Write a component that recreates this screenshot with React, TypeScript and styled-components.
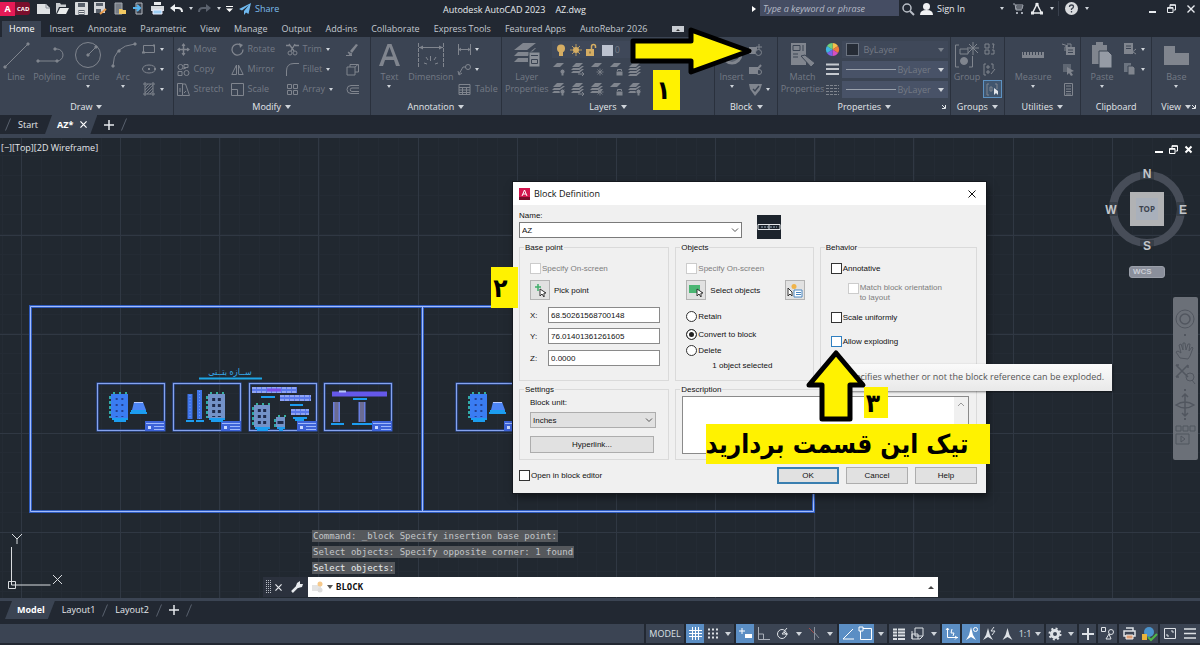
import React from "react";
import styled, { createGlobalStyle, css } from "styled-components";

const ui = `"Open Sans", "Noto Sans", sans-serif`;
const classic = `"Liberation Sans", Arial, sans-serif`;
const mono = `"DejaVu Sans Mono", "Liberation Mono", monospace`;
const persian = `"DejaVu Sans Condensed", "DejaVu Sans", sans-serif`;

const c = {
  frame: "#222832",
  panel: "#3b4453",
  canvas: "#212830",
  text: "#d9dde3",
  dim: "#747a85",
  dimIcon: "#80858e",
  blue: "#5b8ec4",
  yellow: "#fff200",
};

const Global = createGlobalStyle`
  *, *::before, *::after { box-sizing: border-box; }
  body { margin: 0; background: #0d1015; }
  button, input, select, textarea { font: inherit; color: inherit; margin: 0; padding: 0; border: 0; background: none; border-radius: 0; outline: 0; }
  button { cursor: pointer; white-space: nowrap; }
  svg { display: block; flex: none; overflow: visible; }
`;

/* ---------- shared ---------- */

const Page = styled.div`
  position: relative;
  display: flex;
  flex-direction: column;
  min-height: 100vh;
  padding-bottom: 2px;
  overflow: hidden;
  background: ${c.frame};
  color: ${c.text};
  font-family: ${ui};
  font-size: 9px;
  line-height: 12px;
`;

const Caret = styled.span<{ $big?: boolean; $tone?: string }>`
  flex: none;
  border: ${(p) => (p.$big ? 3 : 2)}px solid transparent;
  border-top: ${(p) => (p.$big ? 4 : 3)}px solid ${(p) => p.$tone || "#cfd4da"};
  border-bottom: 0;
`;

const IconButton = styled.button<{ $w?: number }>`
  display: flex;
  align-items: center;
  justify-content: center;
  flex: none;
  width: ${(p) => p.$w || 19}px;
  height: 100%;
`;

type GProps = { w?: number; h?: number; box?: string; sw?: number; children: React.ReactNode };
const G = ({ w = 14, h = w, box, sw = 1, children }: GProps) => (
  <svg width={w} height={h} viewBox={box || `0 0 ${w} ${h}`} fill="none" stroke="currentColor" strokeWidth={sw} aria-hidden="true">
    {children}
  </svg>
);

/* ---------- title bar ---------- */

const TitleBar = styled.header`
  display: grid;
  grid-template-columns: 443fr 306fr 451fr;
  height: 17px;
  color: #e8ebef;
`;
const TitleGroup = styled.div`
  display: flex;
  align-items: center;
  min-width: 0;
`;
const Brand = styled.div`
  display: flex;
  align-items: center;
  width: 30px;
  height: 13px;
  margin-right: 4px;
  background: #7a0f2c;
  color: #fff;
  border-radius: 0 3px 3px 0;
  font-size: 6px;
  font-weight: 700;
`;
const BrandA = styled.span`
  display: grid;
  place-items: center;
  width: 15px;
  height: 14px;
  margin-right: 2px;
  background: #e51a56;
  font-size: 9px;
`;
const Share = styled.button`
  display: flex;
  align-items: center;
  gap: 4px;
  margin-left: 3px;
  color: #7dbdee;
`;
const AppTitle = styled.h1`
  display: flex;
  align-items: center;
  gap: 10px;
  margin: 2px 0 0;
  font-size: 9px;
  font-weight: 400;
`;
const Search = styled.input`
  width: 139px;
  height: 16px;
  align-self: flex-start;
  padding-left: 3px;
  background: #454d63;
  font-style: italic;
  &::placeholder { color: #b5bac6; opacity: 1; }
`;
const Spacer = styled.span<{ $share?: number }>`
  flex: ${(p) => p.$share || 1};
`;
const Flag = styled.span`
  margin: 0 4px 0 3px;
  border: 3px solid transparent;
  border-left: 4px solid #fff;
  border-right: 0;
`;
const SignIn = styled.button`
  display: flex;
  align-items: center;
  gap: 4px;
  margin-left: 3px;
`;
const Rule = styled.span`
  width: 1px;
  height: 15px;
  background: #39404c;
`;

/* ---------- ribbon ---------- */

const MenuBar = styled.nav`
  display: flex;
  align-items: center;
  height: 20px;
  padding: 4px 0 0 2px;
`;
const MenuTab = styled.button<{ $on?: boolean }>`
  height: 16px;
  padding: 0 7px;
  color: #c3c8d0;
  ${(p) => p.$on && css`margin-right: 1px; background: ${c.panel}; color: #fff;`}
`;
const Minimize = styled.button`
  display: grid;
  place-items: center;
  width: 12px;
  height: 6px;
  margin-left: 18px;
  background: #c8ccd2;
`;
const Ribbon = styled.section`
  display: flex;
  height: 78px;
  background: ${c.panel};
  color: ${c.dim};
`;
const Panel = styled.div<{ $grow: number }>`
  display: flex;
  flex-direction: column;
  flex: ${(p) => p.$grow} 1 0;
  min-width: 0;
  border-right: 1px solid #2a313d;
  &:last-child { border-right: 0; }
`;
const PanelBody = styled.div`
  display: flex;
  flex: 1;
  padding-top: 2px;
  white-space: nowrap;
`;
const PanelTitle = styled.div`
  display: grid;
  grid-template-columns: 1fr auto 1fr;
  align-items: center;
  height: 16px;
  padding-bottom: 1px;
  color: #e3e6ea;
`;
const PanelName = styled.span`
  grid-column: 2;
  display: flex;
  align-items: center;
  gap: 4px;
`;
const PanelCorner = styled.button`
  justify-self: end;
  padding-right: 4px;
`;
const Big = styled.button<{ $w: number }>`
  display: flex;
  flex-direction: column;
  align-items: center;
  flex: none;
  width: ${(p) => p.$w}px;
  white-space: normal;
  & > ${Caret} { margin-top: 2px; }
`;
const BigIcon = styled.span`
  display: grid;
  place-items: center;
  height: 32px;
  color: ${c.dimIcon};
`;
const Stack = styled.div<{ $w: number; $pad?: number }>`
  display: flex;
  flex-direction: column;
  flex: none;
  width: ${(p) => p.$w}px;
  padding-left: ${(p) => p.$pad || 0}px;
`;
const Small = styled.button<{ $on?: boolean }>`
  display: flex;
  align-items: center;
  gap: 4px;
  height: 20px;
  & > svg { color: ${c.dimIcon}; }
  ${(p) => p.$on && css`
    justify-content: center;
    width: 19px;
    height: 18px;
    margin-top: 1px;
    border: 1px solid #5d92c2;
    background: #41566e;
  `}
`;
const LayerGrid = styled.div`
  display: grid;
  grid-template-columns: repeat(5, 19px);
`;
const Combo = styled.label<{ $flat?: boolean }>`
  display: flex;
  align-items: center;
  flex: none;
  height: 17px;
  margin: 2px 0 1px;
  padding: 0 4px;
  gap: 1px;
  background: ${(p) => (p.$flat ? "#3f4859" : "#485267")};
`;
const ComboSelect = styled.select`
  flex: 1;
  min-width: 0;
  appearance: none;
`;
const Swatch = styled.span<{ $color: string; $s: number }>`
  width: ${(p) => p.$s}px;
  height: ${(p) => p.$s}px;
  margin-right: 3px;
  border: 1px solid #6b7380;
  background: ${(p) => p.$color};
`;
const LineSample = styled.span`
  width: 50px;
  height: 1px;
  background: #9ba2ad;
`;

type BigToolProps = { w: number; label: string; caret?: boolean; children: React.ReactNode };
const BigTool = ({ w, label, caret, children }: BigToolProps) => (
  <Big $w={w}>
    <BigIcon>{children}</BigIcon>
    {label}
    {caret && <Caret />}
  </Big>
);
type SmallToolProps = { label?: string; caret?: boolean; on?: boolean; name?: string; children: React.ReactNode };
const SmallTool = ({ label, caret, on, name, children }: SmallToolProps) => (
  <Small $on={on} aria-label={name || label}>
    {children}
    {label}
    {caret && <Caret />}
  </Small>
);
type PanelProps = { grow: number; title: string; plain?: boolean; corner?: boolean; children: React.ReactNode };
const RibbonPanel = ({ grow, title, plain, corner, children }: PanelProps) => (
  <Panel $grow={grow}>
    <PanelBody>{children}</PanelBody>
    <PanelTitle>
      <PanelName>
        {title}
        {!plain && <Caret $big />}
      </PanelName>
      {corner && (
        <PanelCorner aria-label={`${title} settings`}>
          <G w={4}><path d="M0 0l3 3M3.500 0v3.500H0" /></G>
        </PanelCorner>
      )}
    </PanelTitle>
  </Panel>
);

type Mark = "bulb" | "freeze" | "lock" | "swap" | "stack";
const LayerIcon = ({ mark, full }: { mark: Mark; full?: boolean }) => (
  <G w={14}>
    <g fill="currentColor" stroke="none">
      <path d="M1 5l4-4h7L8 5z" />
      {full && <path d="M0 8l2-2h6l3-2h2L8.500 8zM0 11l2-2h6l3-2h2l-4.500 4z" />}
      {mark === "stack" && <path d="M0 14l2-2h6l3-2h2l-4.500 4z" />}
      {mark === "bulb" && <path d="M8 9.500a2.500 2.500 0 0 1 5 0q0 1-1 2V14H9v-2.500q-1-1-1-2z" stroke={c.panel} />}
      {mark === "lock" && <path d="M7 9h7v5H7z" stroke={c.panel} />}
    </g>
    {mark === "freeze" && <path d="M10 6.500v7M6.500 10h7M7.500 7.500l5 5M12.500 7.500l-5 5" strokeWidth=".8" />}
    {mark === "lock" && <path d="M8.500 9V7.500h4V9" />}
    {mark === "swap" && <path d="M7 12h6M11 10l2 2-2 2" />}
  </G>
);

/* ---------- file tabs ---------- */

const TabBar = styled.nav<{ $h: number }>`
  display: flex;
  align-items: center;
  height: ${(p) => p.$h}px;
  padding-left: 5px;
  color: #e6e9ed;
`;
const FileTab = styled.button<{ $on?: boolean }>`
  display: flex;
  align-items: center;
  justify-content: center;
  gap: 7px;
  height: 100%;
  padding: 0 7px;
  ${(p) => p.$on && css`
    padding: 0 10px 0 12px;
    background: ${c.panel};
    color: #fff;
    font-weight: 700;
    clip-path: polygon(7px 0, 100% 0, calc(100% - 7px) 100%, 0 100%);
  `}
`;
const Slash = () => (
  <G w={6} h={13}><path d="M5.500 .5L.5 12.500" stroke="#59616e" /></G>
);
const Strip = styled.div<{ $h: number }>`
  height: ${(p) => p.$h}px;
  background: ${c.panel};
`;

/* ---------- model space ---------- */

const Space = styled.main`
  position: relative;
  flex: 1;
  background: ${c.canvas};
  overflow: hidden;
`;
const Drawing = styled.svg`
  position: absolute;
  left: 0;
  top: 0;
`;
const ViewLabel = styled.p`
  position: absolute;
  left: 1px;
  top: 4px;
  margin: 0;
  color: #e3e6e9;
`;
const WindowKeys = styled.div`
  position: absolute;
  right: 4px;
  top: 5px;
  display: flex;
  height: 12px;
  color: #fff;
`;
const Compass = styled.div`
  position: absolute;
  right: 10px;
  top: 28px;
  display: flex;
  flex-direction: column;
  align-items: center;
  gap: 12px;
`;
const Wcs = styled.button`
  width: 36px;
  height: 12px;
  padding-left: 3px;
  border: 1px solid #9a9fa9;
  border-radius: 3px;
  background: #8a8f9b;
  color: #c9cdd5;
  font: 700 8px/10px ${classic};
  text-align: left;
`;
const NavBar = styled.div`
  position: absolute;
  right: 2px;
  top: 159px;
  display: flex;
  width: 25px;
  padding-top: 10px;
  height: 163px;
  justify-content: center;
  background: #6b7078;
  border-radius: 2px;
  color: #51565f;
`;
const History = styled.div`
  position: absolute;
  left: 312px;
  bottom: 24px;
  display: flex;
  flex-direction: column;
  align-items: flex-start;
  gap: 4px;
  color: #c3c6c9;
  font-family: ${mono};
  white-space: pre;
`;
const HistoryLine = styled.span<{ $bright?: boolean }>`
  padding: 0 1px;
  background: #55585c;
  line-height: 12px;
  ${(p) => p.$bright && css`color: #e8eaec;`}
`;
const CommandBar = styled.div`
  position: absolute;
  left: 263px;
  bottom: 1px;
  display: flex;
  align-items: center;
  width: 675px;
  height: 20px;
  background: #2b313d;
  color: #e6e9ed;
`;
const CommandField = styled.label`
  display: flex;
  align-items: center;
  flex: 1;
  height: 20px;
  gap: 3px;
  padding: 0 4px;
  background: #fff;
  color: #111;
`;
const CommandInput = styled.input`
  flex: 1;
  font: 700 9px/12px ${mono};
`;

/* ---------- dialog ---------- */

const Dialog = styled.section`
  position: absolute;
  left: 513px;
  top: 44px;
  width: 473px;
  background: #f0f0f0;
  color: #111;
  font: 8px/11px ${classic};
  box-shadow: 0 0 0 1px #14181e, 2px 4px 8px rgba(0, 0, 0, 0.5);
`;
const DialogTitle = styled.header`
  display: flex;
  align-items: center;
  gap: 4px;
  height: 23px;
  padding: 0 9px 0 6px;
  background: #fff;
  font: 9px/12px ${ui};
`;
const DialogBody = styled.div`
  display: flex;
  flex-direction: column;
  padding: 5px 9px 9px 6px;
`;
const NameRow = styled.div`
  display: flex;
  gap: 15px;
`;
const NameField = styled.label`
  display: flex;
  flex-direction: column;
  gap: 1px;
  width: 223px;
`;
const Picker = styled.span<{ $grey?: boolean }>`
  display: flex;
  align-items: center;
  width: 100%;
  height: 16px;
  padding: 0 2px;
  border: 1px solid ${(p) => (p.$grey ? "#adadad" : "#7a7a7a")};
  background: ${(p) => (p.$grey ? "#e1e1e1" : "#fff")};
`;
const PickerSelect = styled.select`
  flex: 1;
  appearance: none;
`;
const Preview = styled.div`
  display: grid;
  place-items: center;
  width: 24px;
  height: 24px;
  margin-top: 5px;
  background: #1d242d;
`;
const Groups = styled.div`
  display: grid;
  grid-template-columns: 150fr 138fr 157fr;
  gap: 3px 6px;
  margin-top: 3px;
`;
const Box = styled.fieldset<{ $span?: number; $h: number }>`
  grid-column: span ${(p) => p.$span || 1};
  display: flex;
  flex-direction: column;
  min-width: 0;
  height: ${(p) => p.$h}px;
  margin: 0;
  padding: 0 8px 0 10px;
  border: 1px solid #dadada;
  & > legend { height: 11px; margin-left: -6px; padding: 0 1px; }
`;
const Check = styled.label<{ $off?: boolean; $top?: number; $in?: number }>`
  display: flex;
  align-items: flex-start;
  gap: 1px;
  margin: ${(p) => p.$top || 0}px 0 0 ${(p) => p.$in || 0}px;
  line-height: 12px;
  white-space: nowrap;
  color: ${(p) => (p.$off ? "#7d7d7d" : "#111")};
`;
const TwoLines = styled.span`
  line-height: 10px;
`;
const Tick = styled.input<{ $hot?: boolean; $round?: boolean }>`
  appearance: none;
  flex: none;
  width: 11px;
  height: 11px;
  border: 1px solid ${(p) => (p.$hot ? "#2f7fc0" : "#333")};
  background: #fff;
  ${(p) => p.$round && css`border-radius: 50%;`}
  &:disabled { border-color: #ccc; }
  &[type="radio"]:checked { box-shadow: inset 0 0 0 2px #fff; background: #222; }
`;
const Row = styled.div<{ $top: number; $w?: number }>`
  display: flex;
  align-items: center;
  gap: 4px;
  margin-top: ${(p) => p.$top}px;
  ${(p) => p.$w && css`width: ${p.$w}px;`}
`;
const ToolKey = styled.button`
  display: grid;
  place-items: center;
  flex: none;
  width: 20px;
  height: 20px;
  border: 1px solid #b3b3b3;
  background: #e1e1e1;
`;
const Coord = styled.label<{ $top: number }>`
  display: grid;
  grid-template-columns: 18px 1fr;
  align-items: center;
  margin-top: ${(p) => p.$top}px;
`;
const CoordInput = styled.input`
  min-width: 0;
  height: 16px;
  padding: 0 2px;
  border: 1px solid #8a8a8a;
  background: #fff;
`;
const PushButton = styled.button<{ $main?: boolean; $wide?: boolean }>`
  width: ${(p) => (p.$wide ? "124px" : "62px")};
  height: 17px;
  border: ${(p) => (p.$main ? "2px solid #3a7fb0" : "1px solid #adadad")};
  background: #e1e1e1;
`;
const Notes = styled.div`
  display: flex;
  height: 58px;
  margin: 1px -1px 0 -4px;
  border: 1px solid #8a8a8a;
  background: #fff;
`;
const NotesText = styled.textarea`
  flex: 1;
  resize: none;
`;
const ScrollLane = styled.span`
  display: flex;
  justify-content: center;
  width: 14px;
  padding-top: 5px;
  background: #f0f0f0;
  color: #999;
`;
const Footer = styled.footer`
  display: flex;
  align-items: center;
  gap: 7px;
  margin-top: 7px;
`;
const Tooltip = styled.div`
  position: absolute;
  left: 837px;
  top: 226px;
  padding: 7px 8px 8px;
  background: linear-gradient(#fafafa, #e9e9e9);
  color: #555;
  white-space: nowrap;
  box-shadow: 1px 1px 2px rgba(0, 0, 0, 0.5);
`;

/* ---------- notes laid over the window ---------- */

const Marker = styled.strong<{ $x: number; $y: number; $w: number; $h: number; $pad?: number }>`
  position: absolute;
  left: ${(p) => p.$x}px;
  top: ${(p) => p.$y}px;
  display: flex;
  align-items: center;
  justify-content: center;
  width: ${(p) => p.$w}px;
  height: ${(p) => p.$h}px;
  padding-right: ${(p) => p.$pad || 0}px;
  background: ${c.yellow};
  color: #000;
  font-family: ${persian};
  font-size: 26px;
  white-space: nowrap;
`;
const Arrow = styled.svg<{ $x: number; $y: number }>`
  position: absolute;
  left: ${(p) => p.$x}px;
  top: ${(p) => p.$y}px;
  fill: ${c.yellow};
  stroke: #000;
  stroke-width: 5;
  stroke-linejoin: round;
`;

/* ---------- status bar ---------- */

const StatusBar = styled.footer`
  display: flex;
  gap: 2px;
  height: 19px;
  margin-top: 5px;
  color: #dde1e6;
`;
const Segment = styled.div<{ $fill?: boolean }>`
  display: flex;
  align-items: center;
  background: ${c.panel};
  ${(p) => p.$fill && css`flex: 1;`}
`;
const Toggle = styled.button<{ $w: number; $on?: boolean }>`
  display: flex;
  align-items: center;
  justify-content: center;
  gap: 4px;
  width: ${(p) => p.$w}px;
  height: 19px;
  ${(p) => p.$on && css`background: ${c.blue}; color: #fff;`}
`;

/* ---------- drawing content ---------- */

const majors = (n: number, start: number) => Array.from({ length: n }, (_, i) => Math.round(start + i * 99.15) + 0.5);
const minors = (n: number, start: number) => Array.from({ length: n }, (_, i) => Math.round(start + i * 19.83) + 0.5);

const TitleBlock = () => (
  <g>
    <rect x="48" y="38" width="20" height="10" fill="#3d63d8" />
    <path d="M49 40.500h18M57 43.500h10M57 46.500h10" stroke="#9fb8fb" />
    <rect x="51" y="43" width="3" height="3" fill="#c9d8ff" />
  </g>
);
const Frame = ({ x, children }: { x: number; children: React.ReactNode }) => (
  <g transform={`translate(${x} 245)`}>
    <rect x=".5" y=".5" width="67" height="47" stroke="#3358b8" strokeWidth="2" />
    <rect x=".5" y=".5" width="67" height="47" stroke="#86a3ee" />
    <TitleBlock />
    {children}
  </g>
);
type PlanProps = { x: number; y: number; w: number; h: number; open?: boolean };
const Plan = ({ x, y, w, h, open }: PlanProps) => (
  <g>
    <rect x={x} y={y} width={w} height={h} fill={open ? "#7392c8" : "#3a7cf2"} />
    <path d={`M${x + 2} ${y - 1}h${w - 1}`} stroke="#35b09d" strokeWidth="2" strokeDasharray="2 4" />
    <path d={`M${x - 1} ${y + 2}v${h - 2}`} stroke="#2fa9a8" strokeWidth="2" strokeDasharray="3 2" />
    <path
      d={`M${x + w / 3} ${y + 4}v${h - 5}M${x + (2 * w) / 3} ${y + 4}v${h - 5}`}
      stroke={open ? "#1f2b4c" : "#23408f"}
      strokeWidth={open ? 3 : 2}
      strokeDasharray={open ? "3 3" : "2 4"}
    />
    <path d={`M${x + 1} ${y + h + 1}h${w - 1}M${x + 3} ${y + h + 3}h${w - 5}`} stroke="#1c9df0" strokeWidth="2" />
  </g>
);
const FootingSheet = () => (
  <>
    <Plan x={14} y={11} w={17} h={24} />
    <path d="M37 19h9l3 8H35z" fill="#4d85f5" />
    <path d="M37 19.500h9" stroke="#b8caff" />
    <path d="M34 28h15M33 30h17" stroke="#1c9df0" strokeWidth="2" />
  </>
);

const ModelDrawing = () => (
  <Drawing width="1200" height="460" fill="none" aria-hidden="true">
    <g stroke="#242b34">
      {minors(60, 1.5).map((x) => <path key={x} d={`M${x} 0V460`} />)}
      {minors(24, 17).map((y) => <path key={y} d={`M0 ${y}H1200`} />)}
    </g>
    <g stroke="#303843">
      {majors(12, 21).map((x) => <path key={x} d={`M${x} 0V460`} />)}
      {majors(4, 97).map((y) => <path key={y} d={`M0 ${y}H1200`} />)}
    </g>
    <path d="M30.500 168.500H813.500V373.500H30.500ZM422.500 168V373" stroke="#2f5cc0" strokeWidth="3" />
    <path d="M30.500 168.500H813.500V373.500H30.500ZM422.500 168V373" stroke="#a3bcfb" />
    <Frame x={97}><FootingSheet /></Frame>
    <Frame x={173}>
      <path d="M17 11v25M26.500 7v29" stroke="#3f74e8" strokeWidth="5" />
      <path d="M17 12v24M26.500 8v28" stroke="#6f9bff" strokeDasharray="1 2" />
      <path d="M13 38h8M23 38h8" stroke="#1c9df0" strokeWidth="2" />
      <Plan x={35} y={11} w={17} h={24} open />
    </Frame>
    <Frame x={249}>
      <path d="M3 7h45M31 15h31M42 29h18" stroke="#5a78ea" strokeWidth="6" />
      <path d="M3 5h45M31 13h31M42 27h18M3 9h45M31 17h31M42 31h18" stroke="#c3cffb" strokeDasharray="4 1" />
      <path d="M18 7h14" stroke="#7a4fe6" strokeWidth="3" />
      <path d="M12 14h14M41 22h13M44 35h14M46 37h9" stroke="#1c9df0" strokeWidth="2" />
      <Plan x={5} y={22} w={16} h={22} open />
      <Plan x={27} y={34} w={9} h={10} open />
    </Frame>
    <Frame x={324}>
      <path d="M8 11h55" stroke="#6558ea" strokeWidth="5" />
      <path d="M15 8.500h7" stroke="#b6c5fa" strokeWidth="2" />
      <path d="M12.500 19v20M38 19v20" stroke="#6a7fe0" strokeWidth="7" />
      <path d="M12.500 19v20M38 19v20" stroke="#6b6c94" strokeWidth="4" />
      <path d="M29 16h14M7 41h13M28 41h20" stroke="#1c9df0" strokeWidth="2" />
    </Frame>
    <Frame x={456}><FootingSheet /></Frame>
    <text x="230" y="237" fill="#35a9e8" fontFamily={persian} fontSize="9" textAnchor="middle" direction="rtl">ســازه بتــنی</text>
    <path d="M199 240.500h63" stroke="#1ea6e6" strokeWidth="2" />
    <g stroke="#d9dcdf">
      <path d="M11.500 409v38h39M8.500 443.500h7v7h-7z" />
      <path d="M12 396l5 5 5-5M17 401v5M53 437l9 9M62 437l-9 9" />
    </g>
  </Drawing>
);

const ViewCube = () => (
  <svg width="86" height="88" viewBox="0 0 86 88" fill="none" aria-hidden="true">
    <circle cx="43" cy="43" r="34" stroke="#474d58" strokeWidth="8" />
    <path d="M36 3h14v12H36zM36 74h14v14H36zM0 36h13v14H0zM73 36h13v14H73z" fill={c.canvas} opacity=".4" />
    <rect x="26" y="26" width="34" height="34" fill="#b1b2b4" />
    <rect x="32" y="32" width="22" height="22" fill="#a9b0bb" />
    <g fill="#c3c6ca" fontFamily={classic} fontWeight="700" fontSize="12" textAnchor="middle">
      <text x="43" y="12">N</text>
      <text x="43" y="84">S</text>
      <text x="7" y="48">W</text>
      <text x="79" y="48">E</text>
      <text x="43" y="46" fontSize="8" fill="#3c434e" fontFamily={ui}>TOP</text>
    </g>
  </svg>
);

const Restore = () => (
  <G w={9}><path d="M.5 3.500h5.500v5H.5zM3 3V.7h5.500V6H6.500M.5 4.300h5.500M3 1.300h5" /></G>
);
const Cross = ({ s = 7, thin }: { s?: number; thin?: boolean }) => (
  <G w={s} box="0 0 8 8" sw={thin ? 1 : 1.4}><path d="M.5.5l7 7M7.500.5l-7 7" /></G>
);
const Chevron = () => (
  <G w={8} h={5}><path d="M1 .5l3 3 3-3" stroke="#555" /></G>
);
const Disk = () => (
  <G w={13}><path d="M.5.5h12v12H.5z" fill="#d9dbde" stroke="#d9dbde" /><path d="M3 1h7v4H3zM3.500 8h6v5h-6z" fill="#59606b" stroke="none" /><path d="M4 9.500h5M4 11.500h5" stroke="#e9e9e9" /></G>
);

const menus = ["Insert", "Annotate", "Parametric", "View", "Manage", "Output", "Add-ins", "Collaborate", "Express Tools", "Featured Apps", "AutoRebar 2026"];
const layerTools: [string, Mark, boolean][] = [
  ["Turn layer off", "bulb", false],
  ["Isolate layer", "swap", true],
  ["Freeze layer", "freeze", false],
  ["Lock layer", "lock", false],
  ["Make current", "stack", true],
  ["Turn all on", "bulb", true],
  ["Unisolate", "swap", true],
  ["Thaw all", "freeze", true],
  ["Unlock layer", "lock", false],
  ["Match layer", "bulb", true],
];

export default function App() {
  return (
    <Page>
      <Global />
      <TitleBar>
        <TitleGroup>
          <Brand><BrandA>A</BrandA>CAD</Brand>
          <IconButton aria-label="New"><G w={13} h={10}><path d="M0 0h9l4 4v6H0z" fill="#dfe1e4" stroke="none" /><path d="M9 0v4h4" stroke="#8a9099" /></G></IconButton>
          <IconButton aria-label="Open"><G w={13} h={11}><path d="M0 0h4l1 1.500h5V4H3L0 11z" fill="#c9ccd0" stroke="none" /><path d="M4 5h9l-3 6H1z" fill="#e9ebed" stroke="none" /></G></IconButton>
          <IconButton aria-label="Save"><Disk /></IconButton>
          <IconButton aria-label="Save as"><G w={13}><path d="M0 0h11v11H0z" fill="#d2d4d8" stroke="none" /><path d="M2 1h7v3H2zM2 7h5v4H2z" fill="#59606b" stroke="none" /><path d="M6 12l6-5" stroke="#e69a4c" strokeWidth="2" /></G></IconButton>
          <IconButton aria-label="Open from web"><G w={12} h={13}><path d="M1 1h7v11H1z" fill="#777d86" stroke="#a4a9b0" /><path d="M5 7h3l1 1h3v4H5z" fill="#f1c862" stroke="none" /></G></IconButton>
          <IconButton aria-label="Save to web"><G w={12} h={13}><path d="M3 1h6v11H3z" fill="#3a414d" stroke="#b5b9c0" /><path d="M0 6h6M4 3l3 3-3 3" stroke="#57b4ee" strokeWidth="2" /></G></IconButton>
          <IconButton aria-label="Plot"><G w={13}><path d="M3 0h7v3H3z" fill="#e9ebed" stroke="none" /><path d="M0 4h13v5H0z" fill="#d5d8dc" stroke="none" /><path d="M2 8h9v4H2z" fill="#9ccdf2" stroke="#eef" /></G></IconButton>
          <IconButton aria-label="Undo"><G w={13} h={10}><path d="M4 4h4q4 0 4 4" stroke="#eef0f2" strokeWidth="2" /><path d="M0 4l5-4v8z" fill="#eef0f2" stroke="none" /></G></IconButton>
          <IconButton $w={9} aria-label="Undo list"><Caret /></IconButton>
          <IconButton aria-label="Redo"><G w={13} h={10}><path d="M9 4H5Q1 4 1 8" stroke="#5a616d" strokeWidth="2" /><path d="M13 4L8 0v8z" fill="#5a616d" stroke="none" /></G></IconButton>
          <IconButton $w={9} aria-label="Redo list"><Caret /></IconButton>
          <IconButton $w={13} aria-label="Customize"><G w={7} h={6}><path d="M0 .5h7" stroke="#fff" /><path d="M0 2.500h7L3.500 6z" fill="#fff" stroke="none" /></G></IconButton>
          <Share><G w={12}><path d="M12 0L0 6l3 1.500L10 2 5 8v4l2-2.500 2.500 1.500z" fill="#6fb9f0" stroke="none" /></G>Share</Share>
        </TitleGroup>
        <AppTitle><span>Autodesk AutoCAD 2023</span><span>AZ.dwg</span></AppTitle>
        <TitleGroup>
          <Flag />
          <Search aria-label="Search" placeholder="Type a keyword or phrase" />
          <IconButton $w={18} aria-label="Find"><G w={12}><circle cx="5" cy="5" r="4" stroke="#b9bec6" strokeWidth="1.500" /><path d="M8 8l4 4" stroke="#b9bec6" strokeWidth="2" /></G></IconButton>
          <SignIn><G w={13} h={12}><circle cx="6.500" cy="3.500" r="3.500" fill="#f0f1f3" stroke="none" /><path d="M0 12q0-5 6.500-5T13 12z" fill="#f0f1f3" stroke="none" /></G>Sign In</SignIn>
          <Spacer $share={3} />
          <IconButton $w={12} aria-label="Account"><Caret /></IconButton>
          <IconButton $w={20} aria-label="App store"><G w={11}><path d="M0 1h2l1 6h6M3 2h7l-1 4H3zM4 4h5" stroke="#a4a9b2" /><path d="M3 9h2v2H3zM8 9h2v2H8z" fill="#a4a9b2" stroke="none" /></G></IconButton>
          <IconButton $w={18} aria-label="Autodesk"><G w={12}><path d="M6 1l4.500 9h-9z" stroke="#e9ebee" strokeWidth="1.500" /><path d="M4.500 0h3v3h-3zM0 8.500h3v3H0zM9 8.500h3v3H9z" fill="#e9ebee" stroke="none" /></G></IconButton>
          <IconButton $w={12} aria-label="Autodesk list"><Caret /></IconButton>
          <Rule />
          <IconButton $w={24} aria-label="Help"><G w={13}><circle cx="6.500" cy="6.500" r="6.500" fill="#d9dbde" stroke="none" /><path d="M4.500 5q0-2 2-2t2 1.800q0 1.200-2 2.200v1M6.500 9v1.500" stroke="#3a414d" strokeWidth="1.300" /></G></IconButton>
          <IconButton $w={8} aria-label="Help list"><Caret /></IconButton>
          <Spacer $share={5} />
          <IconButton aria-label="Minimize"><G w={7} h={8}><path d="M0 7h7" strokeWidth="2" /></G></IconButton>
          <IconButton aria-label="Restore"><Restore /></IconButton>
          <IconButton aria-label="Close"><Cross s={8} /></IconButton>
        </TitleGroup>
      </TitleBar>

      <MenuBar>
        <MenuTab $on>Home</MenuTab>
        {menus.map((m) => <MenuTab key={m}>{m}</MenuTab>)}
        <Minimize aria-label="Minimize ribbon"><G w={4} h={3}><path d="M0 3l2-2 2 2z" fill="#333" stroke="none" /></G></Minimize>
      </MenuBar>

      <Ribbon>
        <RibbonPanel grow={174} title="Draw">
          <BigTool w={32} label="Line"><G w={28}><path d="M3 26L26 3" /><path d="M2 25h2v2H2zM25 2h2v2h-2z" fill="currentColor" /></G></BigTool>
          <BigTool w={35} label="Polyline"><G w={28}><path d="M2 20h19a6 6 0 0 0 0-12h-2" /><path d="M1 19h2v2H1zM20 19h2v2h-2zM18 7h2v2h-2z" fill="currentColor" /></G></BigTool>
          <BigTool w={42} label="Circle" caret><G w={28}><circle cx="14" cy="14" r="12.500" /><path d="M14 14l8-8" /><path d="M13 13h2v2h-2zM21 5h2v2h-2z" fill="currentColor" /></G></BigTool>
          <BigTool w={28} label="Arc" caret><G w={28}><path d="M4 25Q4 5 26 3" /><path d="M3 24h2v2H3zM25 2h2v2h-2zM9 9h2v2H9z" fill="currentColor" /></G></BigTool>
          <Stack $w={32} $pad={5}>
            <SmallTool name="Rectangle" caret><G w={14}><path d="M1.500 3.500h11v7h-11z" /><path d="M0 9.500h3v2H0zM11 2.500h2v2h-2z" fill="currentColor" stroke="none" /></G></SmallTool>
            <SmallTool name="Ellipse" caret><G w={14}><ellipse cx="7" cy="7" rx="6.500" ry="4" /><path d="M6 6h2v2H6zM12 6h2v2h-2z" fill="currentColor" stroke="none" /></G></SmallTool>
            <SmallTool name="Hatch" caret><G w={14}><path d="M3 0v14M11 0v14M1 2h12M1 12h12" /><path d="M3 5l3-3M3 8l6-6M3 11l8-8M5 12l6-6M8 12l3-3" strokeWidth=".8" /></G></SmallTool>
          </Stack>
        </RibbonPanel>

        <RibbonPanel grow={198} title="Modify">
          <Stack $w={57} $pad={3}>
            <SmallTool label="Move"><G w={13}><path d="M6.500 1v11M1 6.500h11" strokeWidth="1.500" /><path d="M4.500 3l2-3 2 3zM4.500 10l2 3 2-3zM3 4.500l-3 2 3 2zM10 4.500l3 2-3 2z" fill="currentColor" stroke="none" /></G></SmallTool>
            <SmallTool label="Copy"><G w={13}><circle cx="3.500" cy="4" r="2.500" /><circle cx="9.500" cy="10" r="2.500" /><path d="M1 8.500h4v4H1zM7 1.500h4v3H7zM6 6l3-1" /></G></SmallTool>
            <SmallTool label="Stretch"><G w={13}><path d="M.5.5h5v12h-5zM5.500 1l3 0 4 11.500h-7M3 5v4M9 8l-2 2" /></G></SmallTool>
          </Stack>
          <Stack $w={55}>
            <SmallTool label="Rotate"><G w={13}><path d="M9.500 2A5.500 5.500 0 1 0 12 6.500" strokeWidth="1.300" /><path d="M8 0l4 2-3 3z" fill="currentColor" stroke="none" /></G></SmallTool>
            <SmallTool label="Mirror"><G w={13}><path d="M5.500 2v9.500H.8zM7.500 2v9.500h4.700z" /></G></SmallTool>
            <SmallTool label="Scale"><G w={13}><path d="M.5.5h12v12H.5zM.5 6.500h6v6" /></G></SmallTool>
          </Stack>
          <Stack $w={60}>
            <SmallTool label="Trim" caret><G w={13}><path d="M0 2.500h4M9 2.500h4M3 1l5 7M9 1L5 8" strokeWidth="1.300" /><circle cx="4" cy="10" r="2" /><circle cx="9" cy="10" r="2" /></G></SmallTool>
            <SmallTool label="Fillet" caret><G w={13}><path d="M.5 13V8q0-7.500 7.500-7.500h5" /></G></SmallTool>
            <SmallTool label="Array" caret><G w={13}><path d="M1.500 1.500h4v4h-4zM7.500 1.500h4v4h-4zM1.500 7.500h4v4h-4zM7.500 7.500h4v4h-4z" /></G></SmallTool>
          </Stack>
          <Stack $w={20}>
            <SmallTool name="Erase"><G w={13}><path d="M4 8l6-7 2 1-6 8z" fill="currentColor" stroke="none" /><path d="M0 12.500h6" /><path d="M2 9l4 2-2 1z" fill="currentColor" /></G></SmallTool>
            <SmallTool name="Explode"><G w={13}><path d="M1 4h8v8H1zM4 4V1.500h8.500V9H9M9 4l3-2.500" /></G></SmallTool>
            <SmallTool name="Offset"><G w={13}><path d="M13 2.500H5a4 4 0 0 0 0 8h8M13 5H6a1.700 1.700 0 0 0 0 3.500h7" /></G></SmallTool>
          </Stack>
        </RibbonPanel>

        <RibbonPanel grow={131} title="Annotation">
          <BigTool w={37} label="Text" caret><G w={21} h={22}><path d="M0 22L8.500 0h4L21 22h-4l-2-6H6l-2 6zM7 12.500h7L10.500 3z" fill="currentColor" stroke="none" /></G></BigTool>
          <BigTool w={46} label="Dimension"><G w={26}><path d="M.5 1v24M25.500 1v24" strokeDasharray="4 1" /><path d="M1 5.500h24M6 21l3 1M12.500 14v5M20 21l-3 1M8 15l2 3M18 15l-2 3" /><path d="M1 5.500l4-2v4zM25 5.500l-4-2v4z" fill="currentColor" stroke="none" /></G></BigTool>
          <Stack $w={46} $pad={4}>
            <SmallTool name="Linear" caret><G w={13}><path d="M.5 1v11M12.500 1v11M1 6.500h11M3 5L1 6.500 3 8M10 5l2 1.500L10 8" /></G></SmallTool>
            <SmallTool name="Leader" caret><G w={13}><circle cx="10" cy="4" r="2.500" /><path d="M8 4H5l-4 7M0 8l1 4 3-2" /></G></SmallTool>
            <SmallTool label="Table"><G w={13}><path d="M1 1.500h11v10H1zM1 4.500h11M1 7h11M1 9.500h11M4.500 4v7M8.500 4v7" /></G></SmallTool>
          </Stack>
        </RibbonPanel>

        <RibbonPanel grow={214} title="Layers">
          <BigTool w={50} label="Layer Properties"><G w={26}><path d="M0 8L9 1h13l-9 7zM0 14l4-4h12l5-4h1l-8 8zM0 20l4-4h10v4z" fill="currentColor" stroke="none" /><path d="M15 10h11v15H15z" fill="#8b9098" stroke={c.panel} /><path d="M17 13.500h7M17.500 17.500h6v4h-6z" stroke={c.panel} /></G></BigTool>
          <Stack $w={150}>
            <Combo $flat>
              <G w={58} h={14}>
                <g fill="#d5ad63" stroke="none"><circle cx="5" cy="5.500" r="4" /><path d="M3 9h4v4H3z" /><circle cx="20" cy="7" r="3" /><path d="M30 6h8v7h-8z" /></g>
                <path d="M20 1v12M14 7h12M16 3l8 8M24 3l-8 8" stroke="#d5ad63" strokeWidth=".8" />
                <path d="M35.500 6V3.500a2 2 0 0 1 4 0V5" stroke="#d5ad63" strokeWidth="1.500" />
                <path d="M34 8.500v2" stroke="#59503a" />
                <path d="M46 2h11v11H46z" fill="#bcc2cf" stroke="none" />
              </G>
              <ComboSelect aria-label="Current layer"><option>0</option></ComboSelect>
            </Combo>
            <LayerGrid>
              {layerTools.map(([name, mark, full]) => <SmallTool key={name} name={name}><LayerIcon mark={mark} full={full} /></SmallTool>)}
            </LayerGrid>
          </Stack>
        </RibbonPanel>

        <RibbonPanel grow={63} title="Block">
          <BigTool w={33} label="Insert" caret><G w={26}><circle cx="13" cy="12" r="9" strokeWidth="3" /><path d="M7 18h12" /></G></BigTool>
          <Stack $w={30} $pad={1}>
            <SmallTool name="Create block"><G w={13}><path d="M0 4h8v7H0z" fill="currentColor" stroke="none" /><path d="M10 1v6M7 4h6" /><circle cx="9.500" cy="9.500" r="3" fill={c.panel} /></G></SmallTool>
            <SmallTool name="Edit block"><G w={13}><path d="M0 4h9v7H0z" fill="currentColor" stroke="none" /><path d="M6 9l6-7" strokeWidth="2" /><circle cx="10" cy="9" r="2.500" /></G></SmallTool>
            <SmallTool name="Edit attributes" caret><G w={13}><path d="M0 1h5l8 0-2 6-5 6-5-7z" fill="currentColor" stroke="none" /><path d="M4 6l2 2 4-5" stroke={c.panel} strokeWidth="1.500" /></G></SmallTool>
          </Stack>
        </RibbonPanel>

        <RibbonPanel grow={173} title="Properties" corner>
          <BigTool w={48} label="Match Properties"><G w={26}><path d="M2 1h15v22H2z" fill="currentColor" stroke="none" /><path d="M4 3.500h7v5H4zM4 12h5M4 15h5M14 3v6" stroke={c.panel} /><path d="M12 14l4-1 10 8-4 4z" fill="currentColor" stroke={c.panel} /></G></BigTool>
          <Stack $w={16}>
            <SmallTool name="Object colour"><G w={13}><g stroke="none"><path d="M6.500 6.500V0A6.500 6.500 0 0 1 12 3z" fill="#f5c04a" /><path d="M6.500 6.500L12 3a6.500 6.500 0 0 1 0 7z" fill="#ef7a3c" /><path d="M6.500 6.500L12 10a6.500 6.500 0 0 1-5.500 3z" fill="#d64fc0" /><path d="M6.500 6.500V13A6.500 6.500 0 0 1 1 10z" fill="#7b62e8" /><path d="M6.500 6.500L1 10a6.500 6.500 0 0 1 0-7z" fill="#3fb5e0" /><path d="M6.500 6.500L1 3a6.500 6.500 0 0 1 5.500-3z" fill="#6fd07a" /></g></G></SmallTool>
            <SmallTool name="Lineweight"><G w={13}><path d="M0 1.500h13M0 6h13M0 11h13" stroke="#c5c9cf" strokeWidth="2" /></G></SmallTool>
            <SmallTool name="Linetype"><G w={13}><path d="M0 2.500h13M0 5.500h13M0 8.500h13M0 11.500h13" strokeDasharray="3 1" /></G></SmallTool>
          </Stack>
          <Stack $w={106}>
            <Combo $flat><Swatch $color="#262c36" $s={13} /><ComboSelect aria-label="Colour"><option>ByLayer</option></ComboSelect><Caret $big $tone="#7b828d" /></Combo>
            <Combo><LineSample /><ComboSelect aria-label="Lineweight"><option>ByLayer</option></ComboSelect><Caret $big /></Combo>
            <Combo><LineSample /><ComboSelect aria-label="Linetype"><option>ByLayer</option></ComboSelect><Caret $big /></Combo>
          </Stack>
        </RibbonPanel>

        <RibbonPanel grow={53} title="Groups">
          <BigTool w={32} label="Group"><G w={24} h={26}><path d="M4 3H.5v22H4M14 25h3.500V14M5 7h8v5H5z" /><circle cx="9" cy="19" r="3.500" fill="currentColor" /><path d="M18 0v13M12 6h12M14 2l9 9M22 2l-9 9" /></G></BigTool>
          <Stack $w={20}>
            <SmallTool name="Ungroup"><G w={13}><path d="M2 1h4v4H2zM2 7h4v4H2zM9 1h2l-1 4 1 0M9 7h2v4H8" /></G></SmallTool>
            <SmallTool name="Group edit"><G w={13}><path d="M3 1H1v11h2M8 1h2v5M4 3h2v2H4zM4 8h2v2H4zM8 11l4-5" /></G></SmallTool>
            <SmallTool name="Group selection" on><G w={13}><path d="M3 1H1v11h2M9 1h2v5M4 4h2v4H4z" /><path d="M8 5v7l2-2 2 2v-4z" fill="#e2e5e9" stroke="none" /></G></SmallTool>
          </Stack>
        </RibbonPanel>

        <RibbonPanel grow={76} title="Utilities">
          <BigTool w={57} label="Measure" caret><G w={22} h={6}><path d="M0 0h22v6H0z" fill="currentColor" stroke="none" /><path d="M1.500 0v3M4.500 0v3M7.500 0v3M10.500 0v3M13.500 0v3M16.500 0v3M19.500 0v3" stroke={c.panel} /></G></BigTool>
          <Stack $w={16}>
            <SmallTool name="Quick select"><G w={13}><path d="M4 4h9v8H4z" fill="currentColor" stroke="none" /><path d="M0 1l6 2-3 1v4M5 1h4v3" /><path d="M6 7h5M6 9.500h5" stroke={c.panel} /></G></SmallTool>
            <SmallTool name="Select all"><G w={13}><path d="M1 1h8v8H1z" fill="#5e6672" stroke="none" /><path d="M5 4l7 4-3 1 2 3-2 1-2-3-2 2z" fill="currentColor" stroke="none" /></G></SmallTool>
            <SmallTool name="Calculator"><G w={13}><path d="M2.500.5h8v12h-8zM4 3h5M4 6h5M4 8.500h5M4 11h5" /></G></SmallTool>
          </Stack>
        </RibbonPanel>

        <RibbonPanel grow={71} title="Clipboard" plain>
          <BigTool w={42} label="Paste" caret><G w={22} h={26}><path d="M1 3h15v19H1zM5 0h7v4H5z" fill="currentColor" stroke="none" /><path d="M8 9h9l4 4v13H8z" fill="#959ba5" stroke={c.panel} /></G></BigTool>
          <Stack $w={26}>
            <SmallTool name="Cut" caret><G w={14}><path d="M1 1h9v11H1z" fill="currentColor" stroke="none" /><path d="M3 4h5M3 6.500h5" stroke={c.panel} /><path d="M7 8l6 4M7 12l6-5" /></G></SmallTool>
            <SmallTool name="Copy clip" caret><G w={14}><path d="M1 1h7v9H1z" fill="#6c7480" stroke="none" /><path d="M5 4h5l2 2v7H5z" fill="currentColor" stroke={c.panel} /></G></SmallTool>
          </Stack>
        </RibbonPanel>

        <RibbonPanel grow={48} title="View" corner>
          <BigTool w={48} label="Base" caret><G w={25} h={19}><path d="M0 0h11v7h14v12H0z" fill="currentColor" stroke="none" /></G></BigTool>
        </RibbonPanel>
      </Ribbon>

      <TabBar $h={19}>
        <Slash />
        <FileTab>Start</FileTab>
        <FileTab $on>AZ*<Cross s={7} /></FileTab>
        <FileTab aria-label="New tab"><G w={10} sw={1.500}><path d="M5 0v10M0 5h10" /></G></FileTab>
        <Slash />
      </TabBar>
      <Strip $h={4} />

      <Space>
        <ModelDrawing />
        <ViewLabel>[−][Top][2D Wireframe]</ViewLabel>
        <WindowKeys>
          <IconButton $w={15} aria-label="Minimize drawing"><G w={8} h={8}><path d="M0 7h8" strokeWidth="2" /></G></IconButton>
          <IconButton $w={15} aria-label="Restore drawing"><Restore /></IconButton>
          <IconButton $w={15} aria-label="Close drawing"><G w={7} sw={2}><path d="M.5.5l6 6M6.500.5l-6 6" /></G></IconButton>
        </WindowKeys>
        <Compass>
          <ViewCube />
          <Wcs>WCS</Wcs>
        </Compass>
        <NavBar>
          <G w={21} h={150}>
            <circle cx="10" cy="12" r="9" /><circle cx="10" cy="12" r="5" strokeWidth="1.500" />
            <path d="M9 28h2" strokeWidth="2" />
            <path d="M5 51l-4-6 2-1 3 2-2-8 2-1 2 6v-7h2l1 7 2-6h2l-1 7 3-4 1 1-3 8-2 3z" />
            <path d="M1 58l12 12M13 58L1 70M1 58h3M1 70h3M13 58v3" strokeWidth="1.500" /><circle cx="15" cy="70" r="4" /><path d="M17 73l3 4" />
            <path d="M9 83h2M9 112h2" strokeWidth="2" />
            <path d="M10 87v22M7 90l3-3 3 3M7 106l3 3 3-3M1 98q9-6 18 0-9 6-18 0z" strokeWidth="1.500" />
            <path d="M1 119h5v5H1zM8 119h5v5H8zM15 119h5v5h-5zM1 127h13v10H1zM6 129l4 3-4 3z" />
          </G>
        </NavBar>

        <History>
          <HistoryLine>Command: _block Specify insertion base point:</HistoryLine>
          <HistoryLine>Select objects: Specify opposite corner: 1 found</HistoryLine>
          <HistoryLine $bright>Select objects:</HistoryLine>
        </History>
        <CommandBar>
          <G w={9} h={14}><path d="M3.500 0v14M5.500 0v14M7.500 0v14" strokeDasharray="1 1" stroke="#b8bdc5" /></G>
          <IconButton $w={13} aria-label="Close command line"><Cross s={7} /></IconButton>
          <IconButton $w={23} aria-label="Command options"><G w={12}><path d="M1 11l6-6" strokeWidth="2.500" /><path d="M6 2l3-2v3l3 0-1 3-4 1-2-2z" fill="currentColor" stroke="none" /></G></IconButton>
          <CommandField>
            <G w={12}><path d="M0 4h9v6H0z" fill="#e4e4e4" stroke="none" /><circle cx="8" cy="3" r="2.500" fill="#f6c98b" stroke="none" /><circle cx="8" cy="9" r="2.500" fill="#ddd" stroke="none" /></G>
            <Caret $big $tone="#555" />
            <CommandInput aria-label="Command" defaultValue="BLOCK" />
            <G w={6} h={4}><path d="M0 4l3-3 3 3z" fill="#444" stroke="none" /></G>
          </CommandField>
        </CommandBar>

        <Dialog role="dialog" aria-label="Block Definition">
          <DialogTitle>
            <G w={11} h={12}><path d="M0 0h11v12H0z" fill="#d3164e" stroke="none" /><path d="M0 9h11v3H0z" fill="#7a0f2c" stroke="none" /><path d="M3 8l2.500-6L8 8M4 6h3" stroke="#fff" /></G>
            Block Definition
            <Spacer />
            <IconButton $w={11} aria-label="Close dialog"><Cross s={8} thin /></IconButton>
          </DialogTitle>
          <DialogBody>
            <NameRow>
              <NameField>Name:
                <Picker><PickerSelect><option>AZ</option></PickerSelect><Chevron /></Picker>
              </NameField>
              <Preview><G w={22} h={6}><path d="M0 .5h22v5H0zM11 0v6" stroke="#e6e9ec" /><path d="M3 3h16" stroke="#9fb0c0" strokeDasharray="2 1" /></G></Preview>
            </NameRow>
            <Groups>
              <Box $h={139}>
                <legend>Base point</legend>
                <Check $off $top={10}><Tick type="checkbox" disabled />Specify On-screen</Check>
                <Row $top={5}><ToolKey aria-label="Pick point"><G w={13}><path d="M4 0v7M1 3h6" stroke="#3fae6a" strokeWidth="1.500" /><path d="M6 5v7l2-2 2 3v-4h2z" fill="#fff" stroke="#333" /></G></ToolKey>Pick point</Row>
                <Coord $top={7}>X:<CoordInput defaultValue="68.50261568700148" /></Coord>
                <Coord $top={5}>Y:<CoordInput defaultValue="76.01401361261605" /></Coord>
                <Coord $top={6}>Z:<CoordInput defaultValue="0.0000" /></Coord>
              </Box>
              <Box $h={139}>
                <legend>Objects</legend>
                <Check $off $top={10}><Tick type="checkbox" disabled />Specify On-screen</Check>
                <Row $top={5}>
                  <ToolKey aria-label="Select objects"><G w={14} h={13}><path d="M0 1h11v8H0z" fill="#4bb673" stroke="none" /><path d="M8 5v7l2-2 2 3v-4h2z" fill="#fff" stroke="#333" /></G></ToolKey>
                  Select objects<Spacer />
                  <ToolKey aria-label="Quick select"><G w={14} h={13}><path d="M6 6h8v7H6z" fill="#fff" stroke="#4a86c0" /><path d="M8 8.500h5M8 10.500h5" stroke="#4a86c0" /><circle cx="6" cy="2.500" r="2.500" fill="#f0b44a" stroke="none" /><path d="M0 4v8l2-2 2 2V8z" fill="#fff" stroke="#333" /></G></ToolKey>
                </Row>
                <Check $top={11}><Tick type="radio" name="keep" $round />Retain</Check>
                <Check $top={6}><Tick type="radio" name="keep" $round defaultChecked />Convert to block</Check>
                <Check $top={4}><Tick type="radio" name="keep" $round />Delete</Check>
                <Check as="p" $top={3} $in={26}>1 object selected</Check>
              </Box>
              <Box $h={139}>
                <legend>Behavior</legend>
                <Check $top={10}><Tick type="checkbox" />Annotative</Check>
                <Check $off $top={8} $in={17}><Tick type="checkbox" disabled /><TwoLines>Match block orientation<br />to layout</TwoLines></Check>
                <Check $top={9}><Tick type="checkbox" />Scale uniformly</Check>
                <Check $top={12}><Tick type="checkbox" $hot />Allow exploding</Check>
              </Box>
              <Box $h={76}>
                <legend>Settings</legend>
                <Check htmlFor="unit" $top={2}>Block unit:</Check>
                <Row $top={3} $w={126}><Picker $grey><PickerSelect id="unit"><option>Inches</option></PickerSelect><Chevron /></Picker></Row>
                <Row $top={8}><PushButton $wide>Hyperlink...</PushButton></Row>
              </Box>
              <Box $span={2} $h={76}>
                <legend>Description</legend>
                <Notes><NotesText aria-label="Description" /><ScrollLane><G w={8} h={5}><path d="M1 4l3-3 3 3" /></G></ScrollLane></Notes>
              </Box>
            </Groups>
            <Footer>
              <Check><Tick type="checkbox" />Open in block editor</Check>
              <Spacer />
              <PushButton $main>OK</PushButton>
              <PushButton>Cancel</PushButton>
              <PushButton>Help</PushButton>
            </Footer>
          </DialogBody>
        </Dialog>
        <Tooltip role="tooltip">Specifies whether or not the block reference can be exploded.</Tooltip>
      </Space>

      <Strip $h={3} />
      <TabBar $h={18}>
        <FileTab $on>Model</FileTab>
        <FileTab>Layout1</FileTab>
        <Slash />
        <FileTab>Layout2</FileTab>
        <Slash />
        <FileTab aria-label="New layout"><G w={10} sw={1.500}><path d="M5 0v10M0 5h10" /></G></FileTab>
        <Slash />
      </TabBar>

      <StatusBar>
        <Segment $fill />
        <Segment><Toggle $w={38}>MODEL</Toggle></Segment>
        <Segment>
          <Toggle $w={18} $on aria-label="Grid"><G w={13}><path d="M3.500 0v13M6.500 0v13M9.500 0v13M0 3.500h13M0 6.500h13M0 9.500h13" /></G></Toggle>
          <Toggle $w={18} aria-label="Snap"><G w={10} h={11}><path d="M0 1.500h10M0 5.500h10M0 9.500h10" strokeWidth="2" strokeDasharray="2 2" /></G></Toggle>
          <Toggle $w={12} aria-label="Snap list"><Caret $big /></Toggle>
        </Segment>
        <Segment>
          <Toggle $w={18} $on aria-label="Dynamic input"><G w={13}><path d="M3 1v6M0 4h6" /><path d="M6 7h7v4H6z" fill="currentColor" stroke="none" /></G></Toggle>
          <Toggle $w={19} aria-label="Ortho"><G w={13}><path d="M1.500 0v12.500H13M1.500 7h5v5" stroke="#a9afb9" /></G></Toggle>
          <Toggle $w={19} aria-label="Polar"><G w={13}><circle cx="6" cy="7" r="4.500" /><path d="M6 7h6M6 7l5-6M8 5l3 3" /></G></Toggle>
          <Toggle $w={14} aria-label="Polar list"><Caret $big /></Toggle>
          <Toggle $w={17} aria-label="Isodraft"><G w={11} h={13}><path d="M5.500 0v13M5 5l5 6" stroke="#8a919c" /><path d="M0 1l5 5" stroke="#a0504f" /></G></Toggle>
          <Toggle $w={14} aria-label="Isodraft list"><Caret $big /></Toggle>
        </Segment>
        <Segment>
          <Toggle $w={17} $on aria-label="Tracking"><G w={12}><path d="M11 1L1 11h11" /></G></Toggle>
          <Toggle $w={18} $on aria-label="Object snap"><G w={13}><path d="M1.500 1.500h11v11h-11z" /><path d="M0 0h4v4H0z" fill={c.blue} /></G></Toggle>
          <Toggle $w={13} aria-label="Object snap list"><Caret $big /></Toggle>
        </Segment>
        <Segment>
          <Toggle $w={19} aria-label="Lineweight"><G w={12}><path d="M0 1.500h12M0 4.500h12M0 7.500h12M0 11h12" strokeWidth="2" /><path d="M4.500 0v12" stroke={c.panel} /></G></Toggle>
          <Toggle $w={19} aria-label="Selection cycling"><G w={13}><path d="M4 1h8v8H4zM1 4v8h8l3-3M1 12V7h6v5" /></G></Toggle>
          <Toggle $w={13} aria-label="Cycling list"><Caret $big /></Toggle>
        </Segment>
        <Segment><Toggle $w={18} $on aria-label="Dynamic UCS"><G w={13}><path d="M2.500 1v9.500H13M1 3l1.500-2L4 3M10 9l2 1.500-2 2M7 2l-1 4h3L8 9" /></G></Toggle></Segment>
        <Segment>
          <Toggle $w={18} $on aria-label="Annotation visibility"><G w={13}><path d="M6 0l2 8 3 5-5-3-5 3 3-5z" fill="currentColor" stroke="none" /><circle cx="10.500" cy="2.500" r="2" /></G></Toggle>
          <Toggle $w={18} aria-label="Auto scale"><G w={13}><path d="M5 1l2 7 3 5-5-3-5 3 3-5z" fill="currentColor" stroke="none" /><path d="M11 0L8 4h4L9 8" /></G></Toggle>
          <Toggle $w={18} aria-label="Annotation scale"><G w={11} h={12}><path d="M5.500 0l2 7 3 5-5-3-5 3 3-5z" fill="currentColor" stroke="none" /></G></Toggle>
          <Toggle $w={28}>1:1<Caret $big /></Toggle>
        </Segment>
        <Segment>
          <Toggle $w={18} aria-label="Workspace"><G w={12}><circle cx="6" cy="6" r="3.500" strokeWidth="3" /><circle cx="6" cy="6" r="5.500" strokeDasharray="2 2.300" strokeWidth="2" /></G></Toggle>
          <Toggle $w={13} aria-label="Workspace list"><Caret $big /></Toggle>
        </Segment>
        <Segment><Toggle $w={17} aria-label="Monitor"><G w={12}><path d="M6 0v12M0 6h12" strokeWidth="2" /></G></Toggle></Segment>
        <Segment><Toggle $w={19} aria-label="Units"><G w={13}><path d="M.5.5h4v4h-4zM5 12l3-5 2 5z" /><circle cx="10" cy="5" r="2.500" /></G></Toggle></Segment>
        <Segment>
          <Toggle $w={21} aria-label="Plot details"><G w={13}><path d="M3 1h7v3M1 4h11v5H1z" strokeWidth="1.500" /><path d="M3 8h7v4H3z" fill="#d99a72" stroke="#eee" /></G></Toggle>
          <Toggle $w={18} aria-label="Updates"><G w={15} h={14}><circle cx="7" cy="5" r="5" fill="#4b93cc" stroke="none" /><path d="M0 7h5v6H0z" fill="#eab53c" stroke="none" /><path d="M6 10l3 3 6-6" stroke="#4fb649" strokeWidth="2" /></G></Toggle>
        </Segment>
        <Segment>
          <Toggle $w={20} aria-label="Clean screen"><G w={12} h={11}><path d="M.5.5h11v10H.5zM7 3h2v2M3 6v2h2" /></G></Toggle>
          <Toggle $w={20} aria-label="Customization"><G w={12} h={11}><path d="M0 1h12M0 5.500h12M0 10h12" strokeWidth="1.500" /></G></Toggle>
        </Segment>
      </StatusBar>

      <Arrow $x={630} $y={27} width="122" height="48" viewBox="0 0 122 48" aria-hidden="true"><path d="M3 14h58V3l58 21-58 21V34H3z" /></Arrow>
      <Marker $x={653} $y={70} $w={27} $h={40} $pad={6}>۱</Marker>
      <Marker $x={491} $y={267} $w={27} $h={41} $pad={8}>۲</Marker>
      <Arrow $x={806} $y={349} width="60" height="73" viewBox="0 0 60 73" aria-hidden="true"><path d="M30 4l27 32H44v34H16V36H3z" /></Arrow>
      <Marker $x={864} $y={387} $w={24} $h={31} $pad={6}>۳</Marker>
      <Marker $x={706} $y={424} $w={284} $h={40} $pad={22} dir="rtl">تیک این قسمت بردارید</Marker>
    </Page>
  );
}
